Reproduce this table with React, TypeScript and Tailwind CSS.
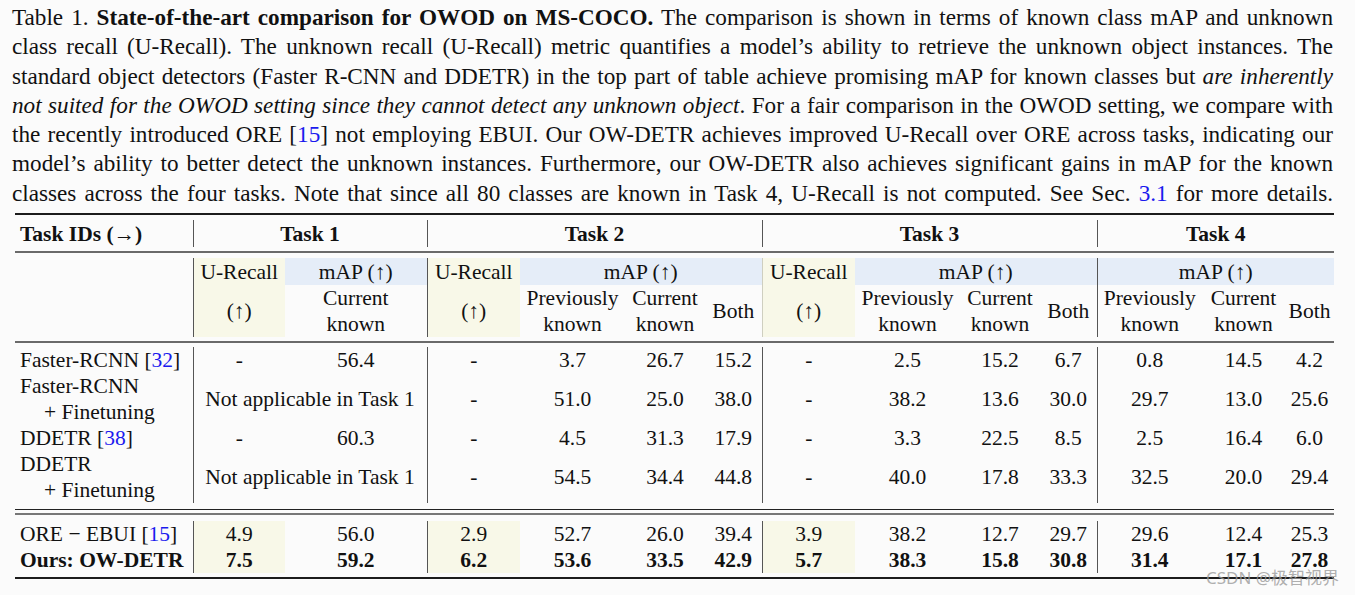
import type { ReactNode } from 'react';

const serif = '[font-family:Liberation_Serif,Times_New_Roman,serif]';

const widths = [178, 92, 142, 93, 105, 80, 57, 93, 105, 80, 57, 105, 83, 49];

type Row = {
  label: ReactNode;
  t1: string[] | null;
  t2: string[];
  t3: string[];
  t4: string[];
  tall?: boolean;
};

const Ref = ({ n }: { n: string }) => (
  <>
    [<span className="text-[#1a1aee]">{n}</span>]
  </>
);

const topRows: Row[] = [
  { label: <>Faster-RCNN <Ref n="32" /></>, t1: ['-', '56.4'], t2: ['-', '3.7', '26.7', '15.2'], t3: ['-', '2.5', '15.2', '6.7'], t4: ['0.8', '14.5', '4.2'] },
  {
    label: (
      <>
        <div>Faster-RCNN</div>
        <div className="pl-[24px]">+ Finetuning</div>
      </>
    ),
    t1: null,
    t2: ['-', '51.0', '25.0', '38.0'],
    t3: ['-', '38.2', '13.6', '30.0'],
    t4: ['29.7', '13.0', '25.6'],
    tall: true,
  },
  { label: <>DDETR <Ref n="38" /></>, t1: ['-', '60.3'], t2: ['-', '4.5', '31.3', '17.9'], t3: ['-', '3.3', '22.5', '8.5'], t4: ['2.5', '16.4', '6.0'] },
  {
    label: (
      <>
        <div>DDETR</div>
        <div className="pl-[24px]">+ Finetuning</div>
      </>
    ),
    t1: null,
    t2: ['-', '54.5', '34.4', '44.8'],
    t3: ['-', '40.0', '17.8', '33.3'],
    t4: ['32.5', '20.0', '29.4'],
    tall: true,
  },
];

const bottomRows: Row[] = [
  { label: <>ORE − EBUI <Ref n="15" /></>, t1: ['4.9', '56.0'], t2: ['2.9', '52.7', '26.0', '39.4'], t3: ['3.9', '38.2', '12.7', '29.7'], t4: ['29.6', '12.4', '25.3'] },
  { label: <b>Ours: OW-DETR</b>, t1: ['7.5', '59.2'], t2: ['6.2', '53.6', '33.5', '42.9'], t3: ['5.7', '38.3', '15.8', '30.8'], t4: ['31.4', '17.1', '27.8'] },
];

const vline = 'border-l border-[#555]';
const yellow = 'bg-[#f8f8e8]';
const blue = 'bg-[#e5edf8]';

function Rule({ h, color }: { h: string; color: string }) {
  return (
    <tr>
      <td colSpan={14} className="p-0">
        <div className={`${h} ${color}`} />
      </td>
    </tr>
  );
}

function Gap({ h }: { h: string }) {
  return (
    <tr>
      <td colSpan={14} className={`p-0 ${h}`} />
    </tr>
  );
}

function DataRow({ row, bold, tint }: { row: Row; bold?: boolean; tint?: boolean }) {
  const h = row.tall ? 'h-[52px]' : 'h-[26px]';
  const cell = `p-0 text-center ${bold ? 'font-bold' : ''}`;
  return (
    <tr className={h}>
      <td className="p-0 pl-[5px] text-left whitespace-nowrap">{row.label}</td>
      {row.t1 ? (
        <>
          <td className={`${cell} ${vline} ${tint ? yellow : ''}`}>{row.t1[0]}</td>
          <td className={cell}>{row.t1[1]}</td>
        </>
      ) : (
        <td colSpan={2} className={`${cell} ${vline} whitespace-nowrap`}>
          Not applicable in Task 1
        </td>
      )}
      <td className={`${cell} ${vline} ${tint ? yellow : ''}`}>{row.t2[0]}</td>
      <td className={cell}>{row.t2[1]}</td>
      <td className={cell}>{row.t2[2]}</td>
      <td className={cell}>{row.t2[3]}</td>
      <td className={`${cell} ${vline} ${tint ? yellow : ''}`}>{row.t3[0]}</td>
      <td className={cell}>{row.t3[1]}</td>
      <td className={cell}>{row.t3[2]}</td>
      <td className={cell}>{row.t3[3]}</td>
      <td className={`${cell} ${vline}`}>{row.t4[0]}</td>
      <td className={cell}>{row.t4[1]}</td>
      <td className={cell}>{row.t4[2]}</td>
    </tr>
  );
}

function Caption() {
  const line = 'text-justify [text-align-last:justify]';
  return (
    <div className="ml-[12px] w-[1321px] pt-[3px] text-[23.2px] leading-[29.3px]">
      <div className={line}>
        Table 1. <b>State-of-the-art comparison for OWOD on MS-COCO.</b> The comparison is shown in terms of known class mAP and unknown
      </div>
      <div className={line}>
        class recall (U-Recall). The unknown recall (U-Recall) metric quantifies a model’s ability to retrieve the unknown object instances. The
      </div>
      <div className={line}>
        standard object detectors (Faster R-CNN and DDETR) in the top part of table achieve promising mAP for known classes but <i>are inherently</i>
      </div>
      <div className={line}>
        <i>not suited for the OWOD setting since they cannot detect any unknown object</i>. For a fair comparison in the OWOD setting, we compare with
      </div>
      <div className={line}>
        the recently introduced ORE [<span className="text-[#1a1aee]">15</span>] not employing EBUI. Our OW-DETR achieves improved U-Recall over ORE across tasks, indicating our
      </div>
      <div className={line}>
        model’s ability to better detect the unknown instances. Furthermore, our OW-DETR also achieves significant gains in mAP for the known
      </div>
      <div className={line}>
        classes across the four tasks. Note that since all 80 classes are known in Task 4, U-Recall is not computed. See Sec.{' '}
        <span className="text-[#1a1aee]">3.1</span> for more details.
      </div>
    </div>
  );
}

export default function App() {
  return (
    <div className={`relative w-[1355px] h-[595px] overflow-hidden bg-[#fbfbfb] text-[#111] text-[21.5px] ${serif}`}>
      <Caption />

      <table className="mt-[5px] ml-[15px] w-[1319px] table-fixed border-collapse leading-[26px]">
        <colgroup>
          {widths.map((w, i) => (
            <col key={i} style={{ width: w }} />
          ))}
        </colgroup>
        <tbody>
          <Rule h="h-[2px]" color="bg-[#1c1c1c]" />
          <Gap h="h-[5px]" />
          <tr className="h-[27px] font-bold">
            <td className="p-0 pl-[5px] whitespace-nowrap">Task IDs (→)</td>
            <td colSpan={2} className={`p-0 text-center ${vline}`}>Task 1</td>
            <td colSpan={4} className={`p-0 text-center ${vline}`}>Task 2</td>
            <td colSpan={4} className={`p-0 text-center ${vline}`}>Task 3</td>
            <td colSpan={3} className={`p-0 text-center ${vline}`}>Task 4</td>
          </tr>
          <Gap h="h-[4px]" />
          <Rule h="h-[2px]" color="bg-[#6a6a6a]" />
          <Gap h="h-[5px]" />

          <tr className="h-[27px]">
            <td className="p-0" />
            <td className={`p-0 text-center ${vline} ${yellow}`}>U-Recall</td>
            <td className={`p-0 text-center ${blue}`}>mAP (↑)</td>
            <td className={`p-0 text-center ${vline} ${yellow}`}>U-Recall</td>
            <td colSpan={3} className={`p-0 text-center ${blue}`}>mAP (↑)</td>
            <td className={`p-0 text-center border-l border-[#cfcfc0] ${yellow}`}>U-Recall</td>
            <td colSpan={3} className={`p-0 text-center ${blue}`}>mAP (↑)</td>
            <td colSpan={3} className={`p-0 text-center ${vline} ${blue}`}>mAP (↑)</td>
          </tr>
          <tr className="h-[52px]">
            <td className="p-0" />
            <td className={`p-0 text-center ${vline} ${yellow}`}>(↑)</td>
            <td className="p-0 text-center">
              <div>Current</div>
              <div>known</div>
            </td>
            <td className={`p-0 text-center ${vline} ${yellow}`}>(↑)</td>
            <td className="p-0 text-center">
              <div>Previously</div>
              <div>known</div>
            </td>
            <td className="p-0 text-center">
              <div>Current</div>
              <div>known</div>
            </td>
            <td className="p-0 text-center">Both</td>
            <td className={`p-0 text-center border-l border-[#cfcfc0] ${yellow}`}>(↑)</td>
            <td className="p-0 text-center">
              <div>Previously</div>
              <div>known</div>
            </td>
            <td className="p-0 text-center">
              <div>Current</div>
              <div>known</div>
            </td>
            <td className="p-0 text-center">Both</td>
            <td className={`p-0 text-center ${vline}`}>
              <div>Previously</div>
              <div>known</div>
            </td>
            <td className="p-0 text-center">
              <div>Current</div>
              <div>known</div>
            </td>
            <td className="p-0 text-center">Both</td>
          </tr>
          <Gap h="h-[4px]" />
          <Rule h="h-[2px]" color="bg-[#6a6a6a]" />
          <Gap h="h-[4px]" />

          {topRows.map((r, i) => (
            <DataRow key={i} row={r} />
          ))}

          <Gap h="h-[6px]" />
          <Rule h="h-[1px]" color="bg-[#222]" />
          <Gap h="h-[3px]" />
          <Rule h="h-[2px]" color="bg-[#777]" />
          <Gap h="h-[6px]" />

          {bottomRows.map((r, i) => (
            <DataRow key={i} row={r} bold={i === 1} tint />
          ))}

          <Gap h="h-[4px]" />
          <Rule h="h-[2px]" color="bg-[#1c1c1c]" />
        </tbody>
      </table>

      <div className="absolute left-[1206px] top-[567px] text-[17px] leading-[22px] text-[#9a9a9a]/80 [font-family:Noto_Sans,Noto_Sans_CJK_SC,sans-serif] whitespace-nowrap">
        CSDN @极智视界
      </div>
    </div>
  );
}
